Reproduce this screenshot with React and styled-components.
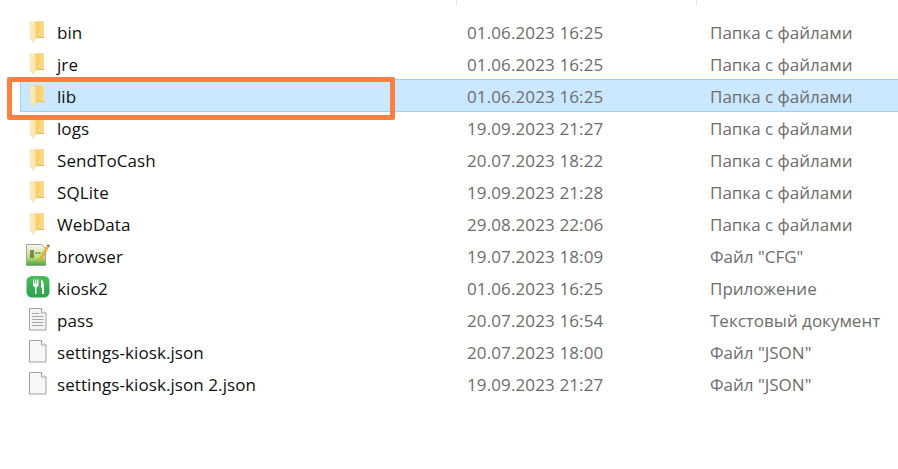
import { createGlobalStyle, styled } from "styled-components";

const GlobalStyle = createGlobalStyle`
	html, body {
		margin: 0;
		padding: 0;
		background: #fff;
	}
`;

const Page = styled.div`
	position: relative;
	width: 898px;
	height: 469px;
	overflow: hidden;
	font-family: "Open Sans", "Noto Sans", sans-serif;
	font-size: 17px;
	background: #fff;
`;

const HeaderStub = styled.div`
	display: grid;
	grid-template-columns: 437px 240px 1fr;
	height: 6px;
	margin: 0 0 9px 20px;
`;

const HeaderCell = styled.div`
	border-right: ${({ $last }) => ($last ? "none" : "1px solid #e5e5e5")};
`;

const FileList = styled.div`
	display: flex;
	flex-direction: column;
`;

const Row = styled.div`
	display: grid;
	grid-template-columns: 437px 240px 1fr;
	align-items: center;
	height: 32px;
	margin-left: 20px;
	background: ${({ $selected }) => ($selected ? "#cce8ff" : "transparent")};
	box-shadow: ${({ $selected }) =>
		$selected ? "inset 0 1px 0 #99d1ff, inset 1px 0 0 #99d1ff, 0 1px 0 #99d1ff" : "none"};
`;

const NameCell = styled.div`
	display: flex;
	align-items: center;
	color: #101010;
	padding-top: 3px;
	letter-spacing: 0.08px;
`;

const IconSlot = styled.span`
	display: flex;
	justify-content: center;
	align-items: center;
	width: 24px;
	height: 24px;
	margin: -3px 7px 0 6px;
`;

const TypeCell = styled.div`
	color: #6d6d6d;
	padding-top: 3px;
	padding-left: 13px;
`;

const DateCell = styled(TypeCell)`
	padding-left: 10px;
	letter-spacing: 0.12px;
`;

const Callout = styled.div`
	position: absolute;
	left: 7px;
	top: 77px;
	width: 378px;
	height: 33px;
	border: 5px solid #ff7f41;
	border-radius: 2px;
`;

const FolderIcon = () => (
	<svg width="24" height="24" viewBox="0 0 24 24">
		<defs>
			<linearGradient id="folderBack" x1="0" x2="1" y1="0" y2="0">
				<stop offset="0" stopColor="#f3cb62" />
				<stop offset="1" stopColor="#fbdc85" />
			</linearGradient>
			<linearGradient id="folderFlap" x1="0" x2="1" y1="0" y2="0">
				<stop offset="0" stopColor="#fff1bd" />
				<stop offset="1" stopColor="#fbe39a" />
			</linearGradient>
		</defs>
		<path d="M9 2.200h9V19H9z" fill="url(#folderBack)" />
		<path d="M9 19h9v-1H9z" fill="#e8bd58" />
		<path d="M4.300 2.200l5.700 1.600v16.200l-3.500 3-.5-3-1.700-.8z" fill="url(#folderFlap)" stroke="#ecd48d" strokeWidth="0.500" />
	</svg>
);

const ConfigIcon = () => (
	<svg width="24" height="24" viewBox="0 0 24 24">
		<defs>
			<linearGradient id="cfgFill" x1="0" x2="0" y1="0" y2="1">
				<stop offset="0" stopColor="#f8f9f2" />
				<stop offset="0.6" stopColor="#c3e07a" />
				<stop offset="1" stopColor="#3fa535" />
			</linearGradient>
		</defs>
		<path d="M0.500 1.500h15l4 4v17h-19z" fill="url(#cfgFill)" stroke="#a3a3a3" />
		<path d="M5 7v8M7 7v8M9.500 10h2M12.500 10h2" stroke="#33421f" strokeWidth="1.100" fill="none" />
		<path d="M12.500 17L21 2.500l2 1.200L14.500 18l-2.500 1.500z" fill="#f4b13f" stroke="#c4822e" strokeWidth="0.400" />
		<path d="M21 2.500l.8-1.300 2 1.200L23 3.700z" fill="#7a4a35" />
	</svg>
);

const AppIcon = () => (
	<svg width="24" height="24" viewBox="0 0 24 24">
		<defs>
			<linearGradient id="appFill" x1="0" x2="0" y1="0" y2="1">
				<stop offset="0" stopColor="#45bf5c" />
				<stop offset="1" stopColor="#2ea24a" />
			</linearGradient>
		</defs>
		<rect x="0.500" y="1" width="23" height="21.500" rx="5.500" fill="url(#appFill)" />
		<path d="M7 4.500h1.200v4h.9v-4h1.200v4h.9v-4h1.300v5.500c0 1.200-1 2-2 2.300V19H9v-6.700c-1-.3-2-1.100-2-2.300z" fill="#fff" />
		<path d="M15 4.500c2 .5 3 3.500 3 7V19h-2v-6.500h-1z" fill="#fff" />
	</svg>
);

const TextDocIcon = () => (
	<svg width="24" height="24" viewBox="0 0 24 24">
		<path d="M3.500 1.500h12l4.500 4.500v17h-16.500z" fill="#f4f4f4" stroke="#a0a0a0" />
		<path d="M15.500 1.500v4.500h4.500" fill="#fff" stroke="#a0a0a0" />
		<path d="M6 6.500h7M6 9.500h11.500M6 12.500h11.500M6 15.500h11.500M6 18.500h11.500" stroke="#a6a6a6" strokeWidth="1.200" />
	</svg>
);

const BlankDocIcon = () => (
	<svg width="24" height="24" viewBox="0 0 24 24">
		<path d="M3.500 1.500h12l4.500 4.500v17h-16.500z" fill="#f7f8f9" stroke="#a0a0a0" />
		<path d="M15.500 1.500v4.500h4.500" fill="#fff" stroke="#a0a0a0" />
	</svg>
);

const files = [
	{ name: "bin", date: "01.06.2023 16:25", type: "Папка с файлами", Icon: FolderIcon },
	{ name: "jre", date: "01.06.2023 16:25", type: "Папка с файлами", Icon: FolderIcon },
	{ name: "lib", date: "01.06.2023 16:25", type: "Папка с файлами", Icon: FolderIcon, selected: true },
	{ name: "logs", date: "19.09.2023 21:27", type: "Папка с файлами", Icon: FolderIcon },
	{ name: "SendToCash", date: "20.07.2023 18:22", type: "Папка с файлами", Icon: FolderIcon },
	{ name: "SQLite", date: "19.09.2023 21:28", type: "Папка с файлами", Icon: FolderIcon },
	{ name: "WebData", date: "29.08.2023 22:06", type: "Папка с файлами", Icon: FolderIcon },
	{ name: "browser", date: "19.07.2023 18:09", type: 'Файл "CFG"', Icon: ConfigIcon },
	{ name: "kiosk2", date: "01.06.2023 16:25", type: "Приложение", Icon: AppIcon },
	{ name: "pass", date: "20.07.2023 16:54", type: "Текстовый документ", Icon: TextDocIcon },
	{ name: "settings-kiosk.json", date: "20.07.2023 18:00", type: 'Файл "JSON"', Icon: BlankDocIcon },
	{ name: "settings-kiosk.json 2.json", date: "19.09.2023 21:27", type: 'Файл "JSON"', Icon: BlankDocIcon },
];

const App = () => (
	<Page>
		<GlobalStyle />
		<HeaderStub>
			<HeaderCell />
			<HeaderCell />
			<HeaderCell $last />
		</HeaderStub>
		<FileList>
			{files.map(({ name, date, type, Icon, selected }) => (
				<Row key={name} $selected={selected}>
					<NameCell>
						<IconSlot>
							<Icon />
						</IconSlot>
						{name}
					</NameCell>
					<DateCell>{date}</DateCell>
					<TypeCell>{type}</TypeCell>
				</Row>
			))}
		</FileList>
		<Callout />
	</Page>
);

export default App;
